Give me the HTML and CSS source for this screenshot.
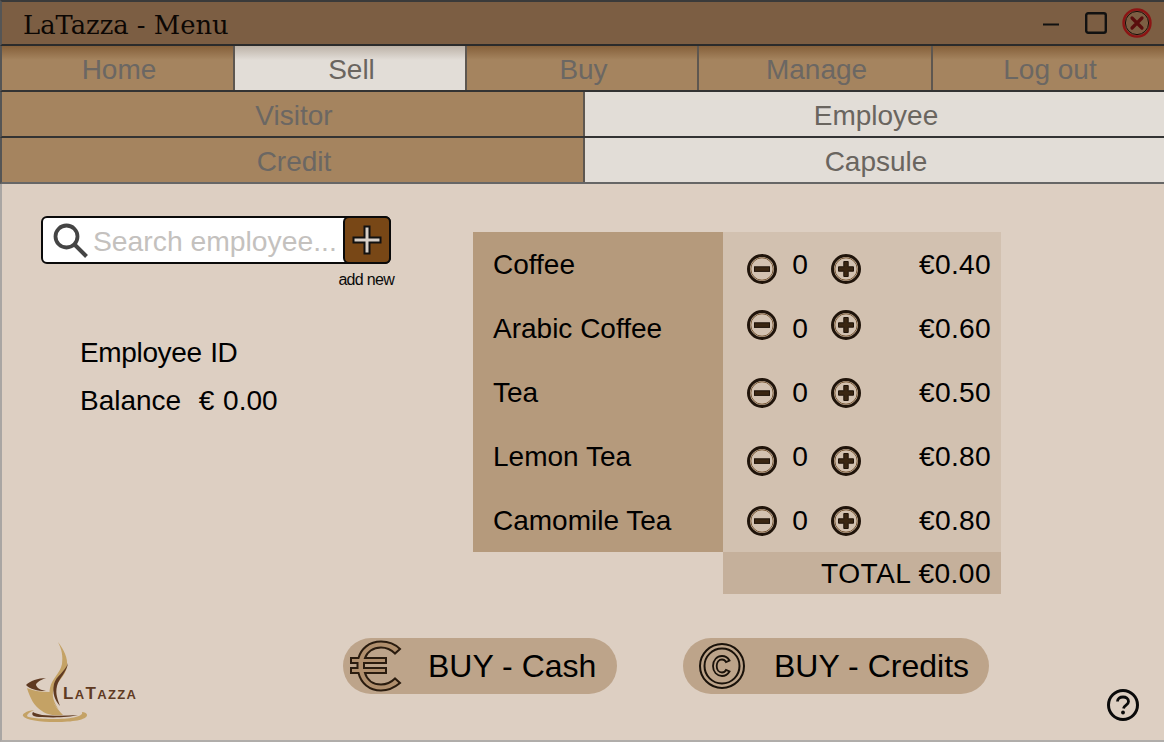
FILE: index.html
```html
<!DOCTYPE html>
<html lang="en">
<head>
<meta charset="utf-8">
<title>LaTazza - Menu</title>
<link rel="stylesheet" href="styles.css">
</head>
<body>
<svg class="defs" width="0" height="0" aria-hidden="true">
  <defs>
    <symbol id="minus" viewBox="0 0 30 30">
      <circle cx="15" cy="15" r="13.5" fill="none" stroke="#20140a" stroke-width="3"/>
      <circle cx="15" cy="15" r="11.2" fill="none" stroke="#7a5a38" stroke-width="1"/>
      <rect x="7.5" y="12.8" width="15" height="4.6" fill="#3a2612" stroke="#20140a"/>
    </symbol>
    <symbol id="plus" viewBox="0 0 30 30">
      <circle cx="15" cy="15" r="13.5" fill="none" stroke="#20140a" stroke-width="3"/>
      <circle cx="15" cy="15" r="11.2" fill="none" stroke="#7a5a38" stroke-width="1"/>
      <path d="M12.8 7.5h4.4v5.3h5.3v4.4h-5.3v5.3h-4.4v-5.3H7.5v-4.4h5.3z" fill="#3a2612" stroke="#20140a"/>
    </symbol>
  </defs>
</svg>
<div class="window">
  <header class="titlebar">
    <h1 class="title">LaTazza - Menu</h1>
    <div class="controls">
      <svg class="ctl-min" width="16" height="3" viewBox="0 0 16 3"><rect width="16" height="2" y="0.5" fill="#111"/></svg>
      <svg class="ctl-max" width="22" height="22" viewBox="0 0 22 22"><rect x="1.2" y="1.2" width="19.6" height="19.6" rx="2" fill="none" stroke="#111" stroke-width="2.4"/></svg>
      <svg class="ctl-close" width="30" height="30" viewBox="0 0 30 30"><circle cx="15" cy="15" r="13.5" fill="none" stroke="#8c1414" stroke-width="2.4"/><circle cx="15" cy="15" r="11.6" fill="none" stroke="#1c0c08" stroke-width="1"/><path d="M10 10l10 10M20 10L10 20" stroke="#5a0d0d" stroke-width="3.2" stroke-linecap="round"/></svg>
    </div>
  </header>
  <nav class="tabs tabs-main">
    <a class="tab tab-top">Home</a>
    <a class="tab tab-top tab-on">Sell</a>
    <a class="tab tab-top">Buy</a>
    <a class="tab tab-top tab-wide">Manage</a>
    <a class="tab tab-top">Log out</a>
  </nav>
  <nav class="tabs tabs-sub">
    <a class="tab">Visitor</a>
    <a class="tab tab-on">Employee</a>
  </nav>
  <nav class="tabs tabs-sub tabs-last">
    <a class="tab">Credit</a>
    <a class="tab tab-on">Capsule</a>
  </nav>
  <main class="content">
    <div class="upper">
      <section class="side">
        <div class="search">
          <svg class="search-icon" width="36" height="36" viewBox="0 0 36 36"><circle cx="13.5" cy="13.5" r="11" fill="none" stroke="#444" stroke-width="3.8"/><path d="M21.500 21.500l12 12" stroke="#444" stroke-width="4"/></svg>
          <input class="search-input" type="text" placeholder="Search employee...">
          <button class="add-btn" type="button" aria-label="add new">
            <svg width="30" height="30" viewBox="0 0 30 30"><path d="M12.500 1.500h5v11h11v5h-11v11h-5v-11h-11v-5h11z" fill="#d8d0c8" stroke="#111" stroke-width="2"/></svg>
          </button>
        </div>
        <div class="add-label">add new</div>
        <div class="info">
          <div class="info-row info-id">Employee ID</div>
          <div class="info-row">Balance &nbsp;€ 0.00</div>
        </div>
      </section>
      <section class="products">
        <div class="product"><div class="p-name">Coffee</div><div class="p-ctl"><svg class="ic off-a"><use href="#minus"/></svg><span class="qty">0</span><svg class="ic off-a"><use href="#plus"/></svg><span class="price">€0.40</span></div></div>
        <div class="product"><div class="p-name">Arabic Coffee</div><div class="p-ctl"><svg class="ic off-b"><use href="#minus"/></svg><span class="qty">0</span><svg class="ic off-b"><use href="#plus"/></svg><span class="price">€0.60</span></div></div>
        <div class="product"><div class="p-name">Tea</div><div class="p-ctl"><svg class="ic off-c"><use href="#minus"/></svg><span class="qty">0</span><svg class="ic off-c"><use href="#plus"/></svg><span class="price">€0.50</span></div></div>
        <div class="product"><div class="p-name">Lemon Tea</div><div class="p-ctl"><svg class="ic off-a"><use href="#minus"/></svg><span class="qty">0</span><svg class="ic off-a"><use href="#plus"/></svg><span class="price">€0.80</span></div></div>
        <div class="product"><div class="p-name">Camomile Tea</div><div class="p-ctl"><svg class="ic off-c"><use href="#minus"/></svg><span class="qty">0</span><svg class="ic off-c"><use href="#plus"/></svg><span class="price">€0.80</span></div></div>
        <div class="total">TOTAL €0.00</div>
      </section>
    </div>
    <div class="footer">
      <div class="logo">
        <svg width="118" height="84" viewBox="0 0 118 84">
          <path d="M36 2C42 10 46 18 45 26C44 36 34 42 31 52C30 58 33 64 37 70C30 62 26 56 28 48C30 38 38 34 40 24C41 16 40 10 36 2Z" fill="#c4a265"/>
          <path d="M46 23C45 32 37 38 35 46C33 54 36 60 38 66C33 60 30 54 32 44C34 36 43 32 46 23Z" fill="#5f3a22"/>
          <path d="M4 45C8 41 16 38 24 38C18 40 14 43 14 45C15 48 18 50 24 51C15 51 8 49 4 45Z" fill="#5f3a22"/>
          <path d="M5 48C12 51 20 52 28 52C29 60 34 68 41 75C30 76 24 74 20 71C12 66 8 58 5 48Z" fill="#c4a265"/>
          <path d="M12 70C4 71 0 74 1 76C4 80 18 82 34 82C50 82 65 80 65 75C65 73 62 72 60 72C62 76 50 79 34 79C20 79 6 78 5 76C5 74 8 72 12 70Z" fill="#c4a265"/>
          <path d="M11 72C9 75 11 77 20 77C34 78 48 77 56 75C44 76 30 76 20 75C16 74 12 73 11 72Z" fill="#5f3a22"/>
          <text x="41" y="59" class="logo-text" textLength="73">L<tspan class="logo-small">A</tspan>T<tspan class="logo-small">AZZA</tspan></text>
        </svg>
      </div>
      <button class="buy buy-cash" type="button">
        <svg width="54" height="52" viewBox="0 0 54 52"><path d="M51 9C45 3 38 1.500 32 1.500C20 1.500 12 9 9.500 18H2v5h6.500v5H2v5h7.500C12 43 20 50.500 32 50.500C38 50.500 45 48 51 43L46 38.500C42 42.500 37 44.500 32 44.500C24 44.500 18 40 16 33H37v-5H15v-5h22v-5H16C18 12 24 7.500 32 7.500C37 7.500 42 9.500 46 13.500Z" fill="#b08f6d" stroke="#2a1c0f" stroke-width="2"/></svg>
        <span>BUY - Cash</span>
      </button>
      <button class="buy buy-credits" type="button">
        <svg width="48" height="48" viewBox="0 0 48 48"><circle cx="24" cy="24" r="22" fill="none" stroke="#1a120a" stroke-width="2"/><circle cx="24" cy="24" r="17.500" fill="none" stroke="#1a120a" stroke-width="2"/><path d="M31.500 18.500C29.500 15 27 14 24 14C19 14 15 18 15 24C15 30 19 34 24 34C27 34 29.500 33 31.500 29.500L28 28C27 30 26 30.500 24 30.500C21 30.500 18.700 28 18.700 24C18.700 20 21 17.500 24 17.500C26 17.500 27 18 28 20Z" fill="none" stroke="#1a120a" stroke-width="1.800"/></svg>
        <span>BUY - Credits</span>
      </button>
      <svg class="help" width="34" height="34" viewBox="0 0 34 34"><circle cx="17" cy="17" r="14.500" fill="none" stroke="#0a0a0a" stroke-width="3"/><path d="M11.500 13.500C11.500 10.500 14 9 17 9C20 9 22.500 10.500 22.500 13.500C22.500 17 18 17 17.500 20.500" fill="none" stroke="#0a0a0a" stroke-width="2.800"/><circle cx="17" cy="24.500" r="1.900" fill="#0a0a0a"/></svg>
    </div>
  </main>
</div>
</body>
</html>
```

FILE: styles.css
```css
* { box-sizing: border-box; }
html, body { margin: 0; padding: 0; }
body { width: 1164px; height: 742px; overflow: hidden; font-family: "Liberation Sans", Arial, sans-serif; color: #000; }
.defs { display: block; height: 0; }

.window {
  width: 1164px; height: 742px;
  display: flex; flex-direction: column;
  background: #ddcfc2;
  border-left: 2px solid #a9a6a3;
  border-bottom: 2px solid #b0adaa;
}

.titlebar {
  height: 46px; flex: none;
  margin-left: -2px;
  padding: 0 12px 0 24px;
  display: flex; align-items: center; justify-content: space-between;
  background: #7c5e43;
  border-top: 2px solid #3a3a3a;
  border-bottom: 2px solid #2b2b2b;
  border-left: 2px solid #555;
}
.title { margin: 3px 0 0 -3px; font: 400 25.8px "DejaVu Serif", serif; color: #0c0704; }
.controls { display: flex; align-items: center; }
.ctl-min { margin-right: 26px; margin-top: 2px; }
.ctl-max { margin-right: 15px; }
.ctl-close { margin-top: 0; }

.tabs { display: flex; flex: none; height: 46px; margin-left: -2px; border-left: 2px solid #555; border-bottom: 2px solid #333; }
.tabs-last { border-bottom-color: #666; }
.tab {
  flex: 1 1 0; display: flex; align-items: center; justify-content: center;
  padding: 4px 0 0 3px;
  font-size: 28px; color: #6b6763;
  background: #a5845f;
  border-right: 2px solid #5e5750;
}
.tab:last-child { border-right: 0; }
.tab-top { background: linear-gradient(#85603a 0, #a5845f 14px); }
.tab-on { background: #e2ddd7; color: #6a655f; }
.tab-top.tab-on { background: linear-gradient(#bdb3a8 0, #e2ddd7 14px); }
.tabs-main .tab { flex: 0 0 232px; }
.tabs-main .tab:first-child { flex-basis: 233px; }
.tabs-main .tab-wide { flex-basis: 234px; }
.tabs-main .tab:last-child { flex: 1 1 0; }
.tabs-sub .tab:first-child { flex: 0 0 583px; }

.content { flex: 1 1 0; display: flex; flex-direction: column; }
.upper { display: flex; padding-left: 39px; }
.side { width: 350px; margin-right: 82px; padding-top: 32px; }
.search {
  display: flex; align-items: center; height: 48px;
  background: #fff; border: 2px solid #0a0a0a; border-radius: 6px;
  padding-left: 10px;
}
.search-icon { flex: none; margin-top: 2px; }
.search-input {
  flex: 1 1 0; min-width: 0; height: 100%; border: 0; outline: 0; padding: 2px 0 0 4px;
  background: transparent; font: 28.3px "Liberation Sans", Arial, sans-serif;
}
.search-input::placeholder { color: #c4c1be; opacity: 1; }
.add-btn {
  flex: none; width: 48px; height: 48px; margin: -2px -2px -2px 0; padding: 0;
  display: flex; align-items: center; justify-content: center;
  background: #784716; border: 2px solid #0a0a0a; border-radius: 6px;
}
.add-label { margin: 7px -3px 0 0; text-align: right; font-size: 16px; letter-spacing: -0.7px; line-height: 18px; color: #0a0a0a; }
.info { margin: 40px 0 0 39px; }
.info-row { font-size: 28px; line-height: 48px; word-spacing: 1px; }
.info-id { letter-spacing: -0.35px; }

.products { display: grid; grid-template-columns: 250px 278px; margin-top: 48px; width: 528px; }
.product { display: contents; }
.p-name { height: 64px; background: #b59a7c; padding-left: 20px; font-size: 28px; line-height: 66px; }
.p-ctl { height: 64px; background: #d2c1b0; display: flex; align-items: center; padding-left: 24px; font-size: 28.2px; }
.ic { width: 30px; height: 30px; flex: none; }
.off-a { margin-top: 10px; }
.off-b { margin-top: -6px; }
.off-c { margin-top: 2px; }
.qty { width: 54px; text-align: center; padding-right: 8px; line-height: 66px; }
.price { margin-left: auto; padding-right: 10px; letter-spacing: 0.3px; line-height: 66px; }
.total {
  grid-column: 2; height: 42px; background: #c5b09b;
  text-align: right; padding-right: 10px; font-size: 28.2px; line-height: 42px; letter-spacing: 0.4px;
}

.footer { flex: 1 1 0; display: flex; align-items: flex-start; padding-left: 20px; }
.logo { width: 118px; margin-top: 46px; flex: none; }
.logo svg { display: block; }
.logo-text { font: 700 17px "Liberation Sans", Arial, sans-serif; fill: #5f3a22; }
.logo-small { font-size: 13px; }
.buy {
  height: 56px; margin-top: 44px; padding: 0; border: 0; border-radius: 28px;
  background: #bda48a; color: #000; font: 32px "Liberation Sans", Arial, sans-serif;
  display: flex; align-items: center;
}
.buy-cash { width: 274px; margin-left: 203px; padding-left: 6px; }
.buy-cash svg { margin-right: 25px; }
.buy-credits { width: 306px; margin-left: 66px; padding-left: 15px; }
.buy-credits svg { margin-right: 28px; }
.help { margin: 94px 0 0 117px; flex: none; }
```
